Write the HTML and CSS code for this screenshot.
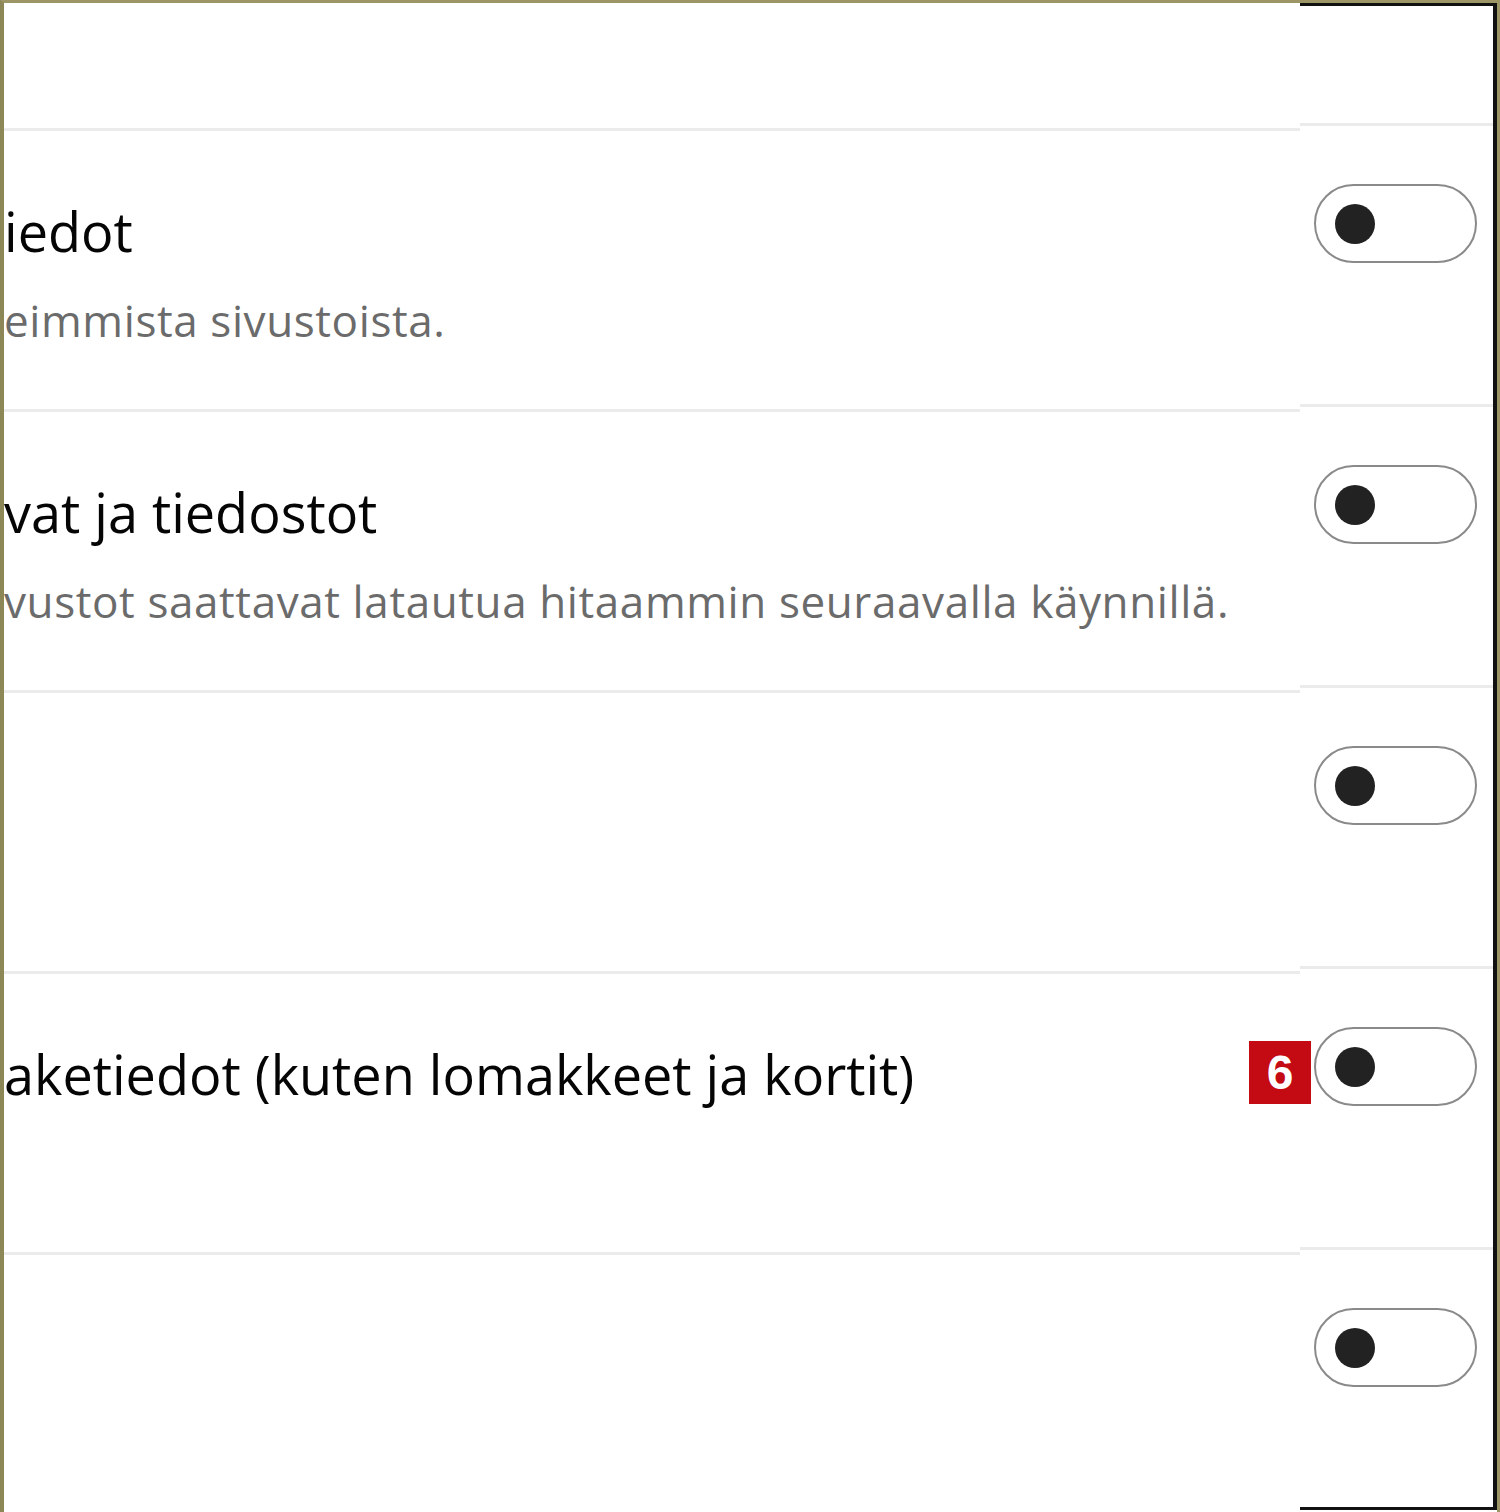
FILE: index.html
```html
<!DOCTYPE html>
<html lang="fi">
<head>
    <meta charset="UTF-8">
    <meta name="viewport" content="width=device-width, initial-scale=1.0">
    <title>Tyhjennä selaustiedot</title>
    <link rel="stylesheet" href="styles.css">
</head>
<body>
    <div class="frame">
        <!-- Left side: the names and descriptions of the data types -->
        <div class="list">
            <div class="list-head"></div>
            <div class="row">
                <div class="row-title">iedot</div>
                <div class="row-desc">eimmista sivustoista.</div>
            </div>
            <div class="row">
                <div class="row-title">vat ja tiedostot</div>
                <div class="row-desc">vustot saattavat latautua hitaammin seuraavalla käynnillä.</div>
            </div>
            <div class="row"></div>
            <div class="row">
                <div class="row-title">aketiedot (kuten lomakkeet ja kortit)</div>
            </div>
            <div class="row"></div>
        </div>

        <!-- Right side: one switch for each row -->
        <div class="toggles">
            <div class="toggles-head"></div>
            <div class="toggle-row"><span class="switch"><span class="knob"></span></span></div>
            <div class="toggle-row"><span class="switch"><span class="knob"></span></span></div>
            <div class="toggle-row"><span class="switch"><span class="knob"></span></span></div>
            <div class="toggle-row"><span class="switch"><span class="knob"></span></span></div>
            <div class="toggle-row"><span class="switch"><span class="knob"></span></span></div>
        </div>

        <span class="badge">6</span>
    </div>
</body>
</html>
```

FILE: styles.css
```css
body {
    margin: 0;
    background-color: #fff;
    font-family: "Open Sans", "Noto Sans", sans-serif;
}
.frame {
    position: relative;
    display: flex;
    box-sizing: border-box;
    width: 1500px;
    height: 1512px;
    border-left: 4px solid #8d8657;
    border-top: 3px solid #9c9566;
    border-right: 3px solid #9c9566;
    background-color: #fff;
}
.list {
    width: 1296px;
    overflow: hidden;
}
.list-head {
    height: 125px;
}
.row {
    box-sizing: border-box;
    height: 281px;
    border-top: 3px solid #ebebeb;
    padding-top: 68px;
}
.row-title {
    font-size: 54px;
    font-weight: 500;
    line-height: 64px;
    color: #050505;
    white-space: nowrap;
}
.row-desc {
    margin-top: 33px;
    font-size: 44px;
    line-height: 48px;
    letter-spacing: 0.6px;
    color: #6b6b6b;
    white-space: nowrap;
}
.toggles {
    flex: 1;
    border-top: 3px solid #111;
    border-right: 4px solid #111;
    border-bottom: 3px solid #111;
    margin-bottom: 2px;
}
.toggles-head {
    height: 117px;
}
.toggle-row {
    box-sizing: border-box;
    height: 281px;
    border-top: 3px solid #ebebeb;
    padding: 58px 0 0 14px;
}
.switch {
    display: flex;
    align-items: center;
    box-sizing: border-box;
    width: 163px;
    height: 79px;
    padding-left: 19px;
    border: 2px solid #8a8a8a;
    border-radius: 40px;
}
.knob {
    width: 40px;
    height: 40px;
    border-radius: 50%;
    background-color: #222;
}
.badge {
    position: absolute;
    left: 1245px;
    top: 1038px;
    width: 62px;
    height: 63px;
    background-color: #c40a12;
    color: #fff;
    font-family: "Liberation Sans", Arial, sans-serif;
    font-weight: bold;
    font-size: 48px;
    line-height: 63px;
    text-align: center;
}
```
